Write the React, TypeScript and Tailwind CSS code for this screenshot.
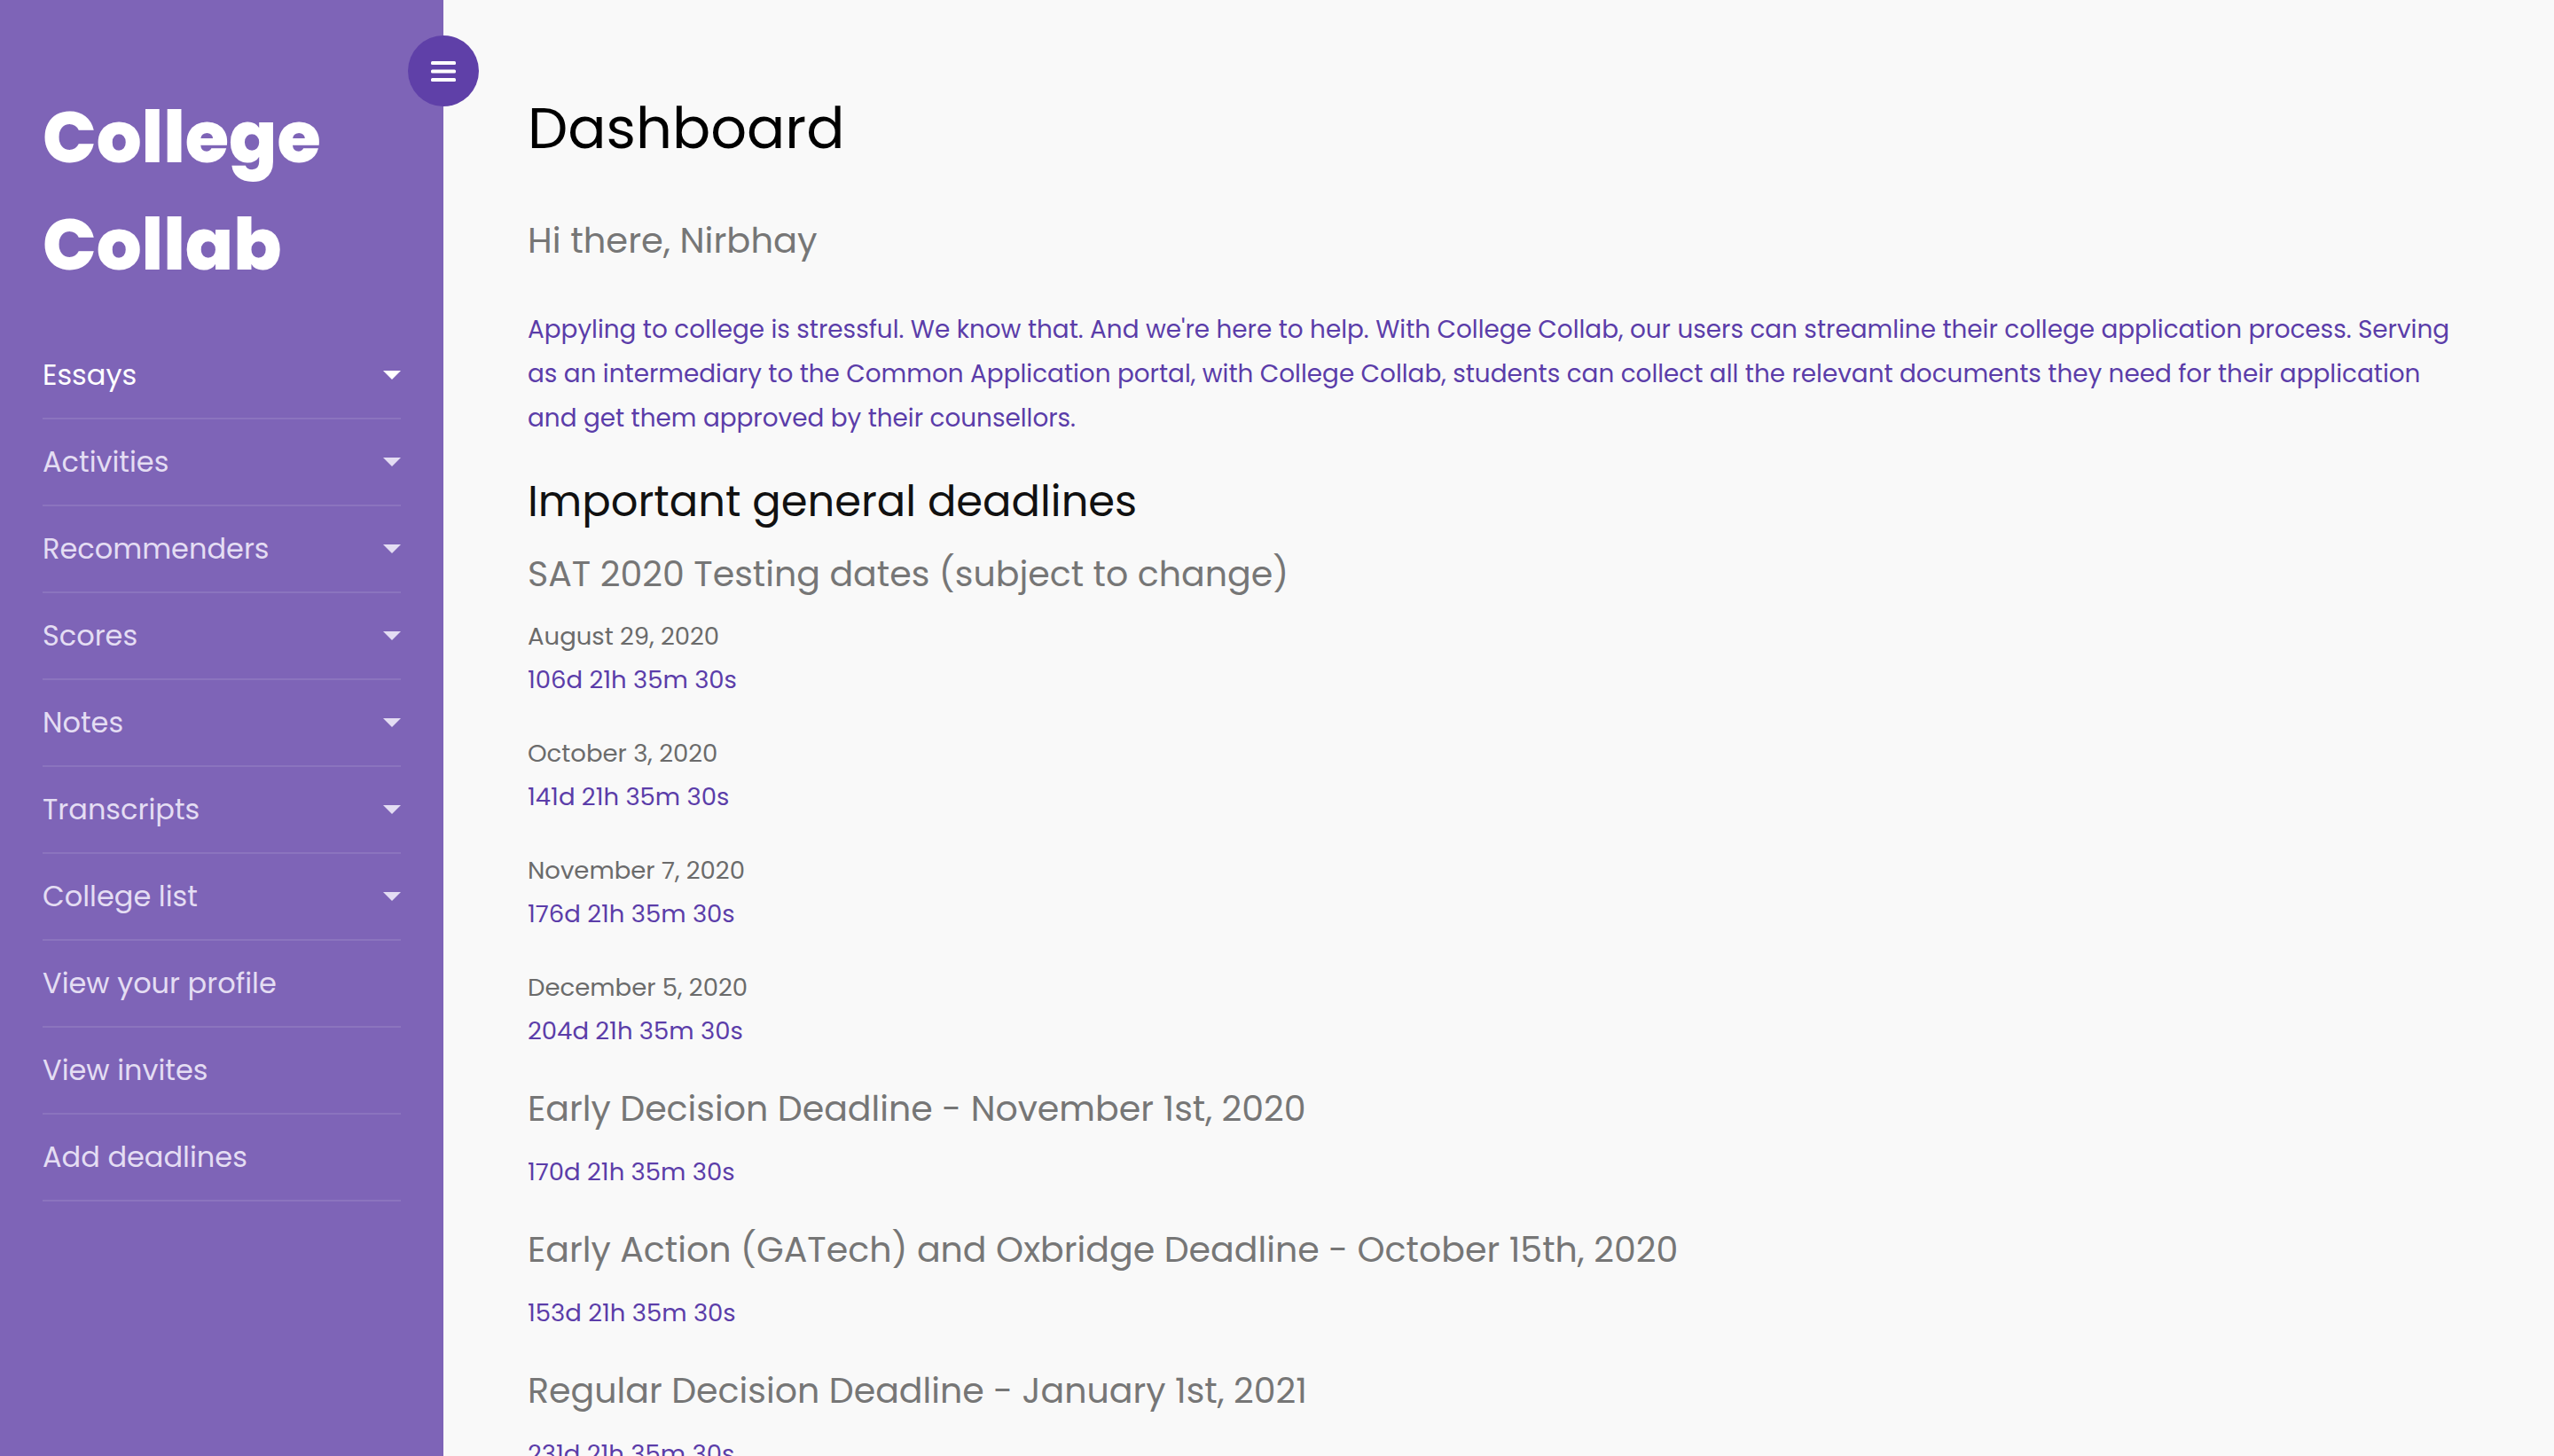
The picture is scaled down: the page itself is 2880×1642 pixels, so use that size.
import { useState } from "react";

type NavItem = {
  label: string;
  dropdown?: boolean;
};

const NAV_ITEMS: NavItem[] = [
  { label: "Essays", dropdown: true },
  { label: "Activities", dropdown: true },
  { label: "Recommenders", dropdown: true },
  { label: "Scores", dropdown: true },
  { label: "Notes", dropdown: true },
  { label: "Transcripts", dropdown: true },
  { label: "College list", dropdown: true },
  { label: "View your profile" },
  { label: "View invites" },
  { label: "Add deadlines" },
];

const SAT_DATES = [
  { date: "August 29, 2020", countdown: "106d 21h 35m 30s" },
  { date: "October 3, 2020", countdown: "141d 21h 35m 30s" },
  { date: "November 7, 2020", countdown: "176d 21h 35m 30s" },
  { date: "December 5, 2020", countdown: "204d 21h 35m 30s" },
];

const DEADLINES = [
  { title: "Early Decision Deadline - November 1st, 2020", countdown: "170d 21h 35m 30s" },
  {
    title: "Early Action (GATech) and Oxbridge Deadline - October 15th, 2020",
    countdown: "153d 21h 35m 30s",
  },
  { title: "Regular Decision Deadline - January 1st, 2021", countdown: "231d 21h 35m 30s" },
];

function Caret() {
  return (
    <svg width="20" height="10" viewBox="0 0 20 10" className="shrink-0">
      <polygon points="0,0 20,0 10,10" fill="currentColor" />
    </svg>
  );
}

function MenuIcon() {
  return (
    <svg width="28" height="23" viewBox="0 0 28 23">
      <rect x="0" y="0" width="28" height="4" rx="1.5" fill="white" />
      <rect x="0" y="9.5" width="28" height="4" rx="1.5" fill="white" />
      <rect x="0" y="19" width="28" height="4" rx="1.5" fill="white" />
    </svg>
  );
}

function Sidebar() {
  const [active] = useState("Essays");

  return (
    <aside className="relative w-[500px] shrink-0 bg-[#7e64b7] px-[48px] pt-[95px]">
      <button className="absolute top-[40px] right-[-40px] z-10 flex size-[80px] items-center justify-center rounded-full bg-[#5f40a8]">
        <MenuIcon />
      </button>

      <h1 className="text-[80px] leading-[121px] font-extrabold text-white">
        College
        <br />
        Collab
      </h1>

      <nav className="mt-[38px]">
        {NAV_ITEMS.map((item) => (
          <a
            key={item.label}
            href="#"
            className={`flex h-[98px] items-center justify-between border-b-2 border-white/10 text-[32px] ${
              item.label === active ? "text-white" : "text-[#e4ddf3]"
            }`}
          >
            <span>{item.label}</span>
            {item.dropdown && <Caret />}
          </a>
        ))}
      </nav>
    </aside>
  );
}

export default function App() {
  return (
    <div className="flex h-screen overflow-hidden bg-[#f9f9f9] font-['Poppins','DejaVu_Sans',sans-serif]">
      <Sidebar />

      <main className="flex-1 pt-[105px] pl-[95px]">
        <h2 className="text-[64px] leading-[80px] text-black">Dashboard</h2>
        <p className="mt-[61px] text-[40px] leading-[50px] text-[#767676]">Hi there, Nirbhay</p>

        <p className="mt-[51px] text-[27.85px] leading-[50px] text-[#5b3da9]">
          Appyling to college is stressful. We know that. And we're here to help. With College Collab, our users
          can streamline their college application process. Serving
          <br />
          as an intermediary to the Common Application portal, with College Collab, students can collect all the
          relevant documents they need for their application
          <br />
          and get them approved by their counsellors.
        </p>

        <h3 className="mt-[41px] text-[48px] leading-[56px] text-[#111]">Important general deadlines</h3>

        <section>
          <h4 className="mt-[29px] text-[39.5px] leading-[50px] text-[#767676]">
            SAT 2020 Testing dates (subject to change)
          </h4>
          {SAT_DATES.map((item, i) => (
            <div key={item.date} className={i === 0 ? "mt-[25px]" : "mt-[43px]"}>
              <p className="text-[27.5px] leading-[40px] text-[#6b6b6b]">{item.date}</p>
              <p className="mt-[9px] text-[27.5px] leading-[40px] text-[#5b3da9]">{item.countdown}</p>
            </div>
          ))}
        </section>

        {DEADLINES.map((item) => (
          <section key={item.title} className="mt-[43px]">
            <h4 className="text-[39.5px] leading-[50px] text-[#767676]">{item.title}</h4>
            <p className="mt-[26px] text-[27.5px] leading-[40px] text-[#5b3da9]">{item.countdown}</p>
          </section>
        ))}
      </main>
    </div>
  );
}
